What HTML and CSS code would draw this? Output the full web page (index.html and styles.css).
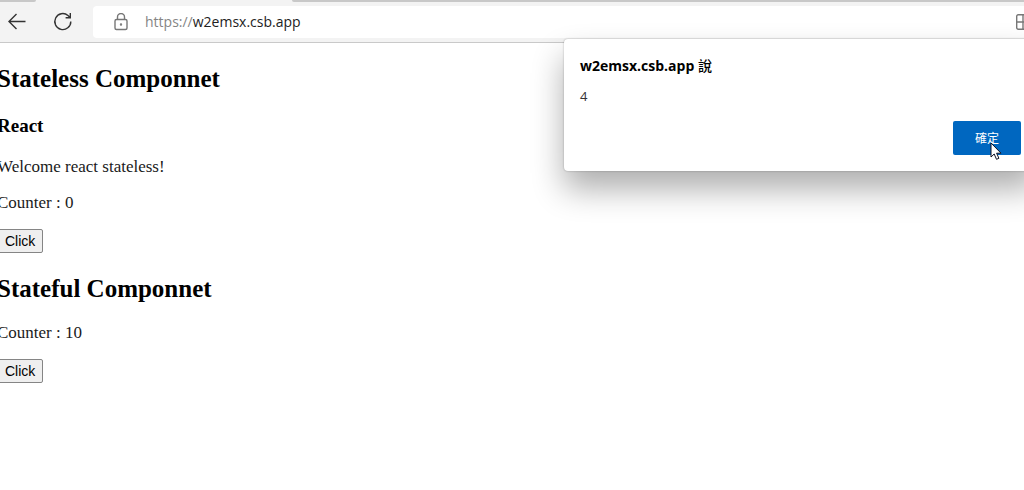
FILE: index.html
```
<!DOCTYPE html>
<html lang="zh-Hant">
<head>
	<meta charset="utf-8">
	<title>w2emsx.csb.app</title>
	<link rel="stylesheet" href="styles.css">
</head>
<body>
	<header class="browser">
		<div class="tabs">
			<div class="tabPrev"></div>
			<div class="tabActive"></div>
			<div class="tabRest"></div>
		</div>
		<div class="toolbar">
			<button type="button" class="nav" aria-label="Back">
				<svg width="20" height="20" viewBox="0 0 20 20"><path d="M18.500 9.500H2M9.500 2L2 9.500L9.500 17"/></svg>
			</button>
			<button type="button" class="nav" aria-label="Refresh">
				<svg width="20" height="20" viewBox="0 0 20 20"><path d="M17.800 9.500A8 8 0 1 1 15 3.500L17 5.500M17.300 1V5.700H12.600"/></svg>
			</button>
			<div class="address">
				<svg class="lock" width="16" height="18" viewBox="0 0 16 18"><rect x="2" y="6.500" width="12" height="10" rx="1.500"/><path d="M4.500 6.500V4a3.500 3.500 0 0 1 7 0V6.500"/><circle cx="8" cy="11.500" r="0.500"/></svg>
				<a class="url" href="#"><span class="scheme">https://</span>w2emsx.csb.app</a>
				<svg class="grid" width="16" height="16" viewBox="0 0 16 16"><rect x="0.700" y="0.700" width="14.600" height="14.600" rx="1.500"/><path d="M7 1V15M1 8H15"/></svg>
			</div>
		</div>
	</header>

	<main class="page">
		<section>
			<h2>Stateless Componnet</h2>
			<h3>React</h3>
			<p>Welcome react stateless!</p>
			<p>Counter : 0</p>
			<button type="button" class="click">Click</button>
		</section>
		<section>
			<h2>Stateful Componnet</h2>
			<p>Counter : 10</p>
			<button type="button" class="click">Click</button>
		</section>
	</main>

	<div class="alert" role="alertdialog" aria-labelledby="alertTitle">
		<div class="alertTitle" id="alertTitle">w2emsx.csb.app <span class="says">說</span></div>
		<div class="alertText">4</div>
		<div class="alertActions">
			<button type="button" class="ok">確定</button>
			<svg class="cursor" width="12" height="19" viewBox="0 0 12 19"><path d="M1 1V15L4.200 12L6.500 17.300L8.900 16.300L6.600 11.200H11Z"/></svg>
		</div>
	</div>
</body>
</html>
```

FILE: styles.css
```
body {
	margin: 0;
	min-height: 100vh;
	position: relative;
	overflow: hidden;
	background: white;
	color: #000;
	font-family: "Liberation Serif", serif;
	font-size: 17px;
	line-height: 20px;
}

/* browser bar */
.browser {
	background: #f3f3f3;
	border-bottom: 1px solid #c9c9c9;
}
.tabs {
	display: flex;
	height: 2px;
}
.tabPrev {
	width: 36px;
	background: #c8c8c8;
	border-bottom-right-radius: 2px;
}
.tabActive {
	width: 256px;
}
.tabRest {
	flex: 1;
	background: #c8c8c8;
	border-bottom-left-radius: 2px;
}
.toolbar {
	display: flex;
	align-items: center;
	padding: 4px 0;
}
.nav {
	width: 46px;
	height: 32px;
	padding: 0 7px;
	border: 0;
	background: none;
	text-align: left;
}
.nav svg {
	display: block;
}
svg {
	fill: none;
	stroke: #333;
	stroke-width: 1.4;
}
.address {
	flex: 1;
	display: flex;
	align-items: center;
	height: 32px;
	margin-left: 1px;
	padding-left: 20px;
	background: white;
	border-radius: 4px 0 0 4px;
	overflow: hidden;
}
.lock {
	stroke: #777;
}
.url {
	flex: 1;
	margin-left: 16px;
	color: #222;
	font: 14px/20px "Open Sans", sans-serif;
	text-decoration: none;
}
.scheme {
	color: #858585;
}
.grid {
	margin-right: -8px;
	stroke: #777;
}

/* page content, scrolled a little to the right */
.page {
	margin-left: -3px;
	padding-top: 22px;
}
h2 {
	margin: 0 0 20px;
	font-size: 25px;
	line-height: 28px;
}
h3 {
	margin: 22px 0 20px;
	font-size: 19px;
	line-height: 22px;
}
p {
	margin: 0 0 16px;
	color: #1a1a1a;
}
section + section {
	margin-top: 22px;
}
.click {
	display: block;
	height: 24px;
	padding: 0 7px;
	border: 1px solid #858585;
	border-radius: 2px;
	background: #efefef;
	color: #000;
	font: 14px/20px "Liberation Sans", sans-serif;
}

/* alert box */
.alert {
	position: absolute;
	top: 39px;
	right: -13px;
	width: 473px;
	padding: 16px;
	box-sizing: border-box;
	background: white;
	border-radius: 4px;
	box-shadow: 0 0 2px rgba(0, 0, 0, 0.3), 0 18px 32px rgba(0, 0, 0, 0.32);
	font-family: "Open Sans", "Noto Sans CJK TC", sans-serif;
}
.alertTitle {
	font-size: 14px;
	line-height: 22px;
	font-weight: bold;
}
.says {
	font-weight: 500;
}
.alertText {
	margin-top: 9px;
	font-size: 13px;
	line-height: 20px;
	color: #333;
}
.alertActions {
	position: relative;
	display: flex;
	justify-content: flex-end;
	margin-top: 15px;
}
.ok {
	width: 68px;
	height: 34px;
	padding: 0;
	border: 0;
	border-radius: 2px;
	background: #0067c0;
	color: white;
	font: 12px/20px "Noto Sans CJK TC", sans-serif;
}
.cursor {
	position: absolute;
	top: 21px;
	right: 19px;
	fill: white;
	stroke: #112;
	stroke-width: 1;
}
```
